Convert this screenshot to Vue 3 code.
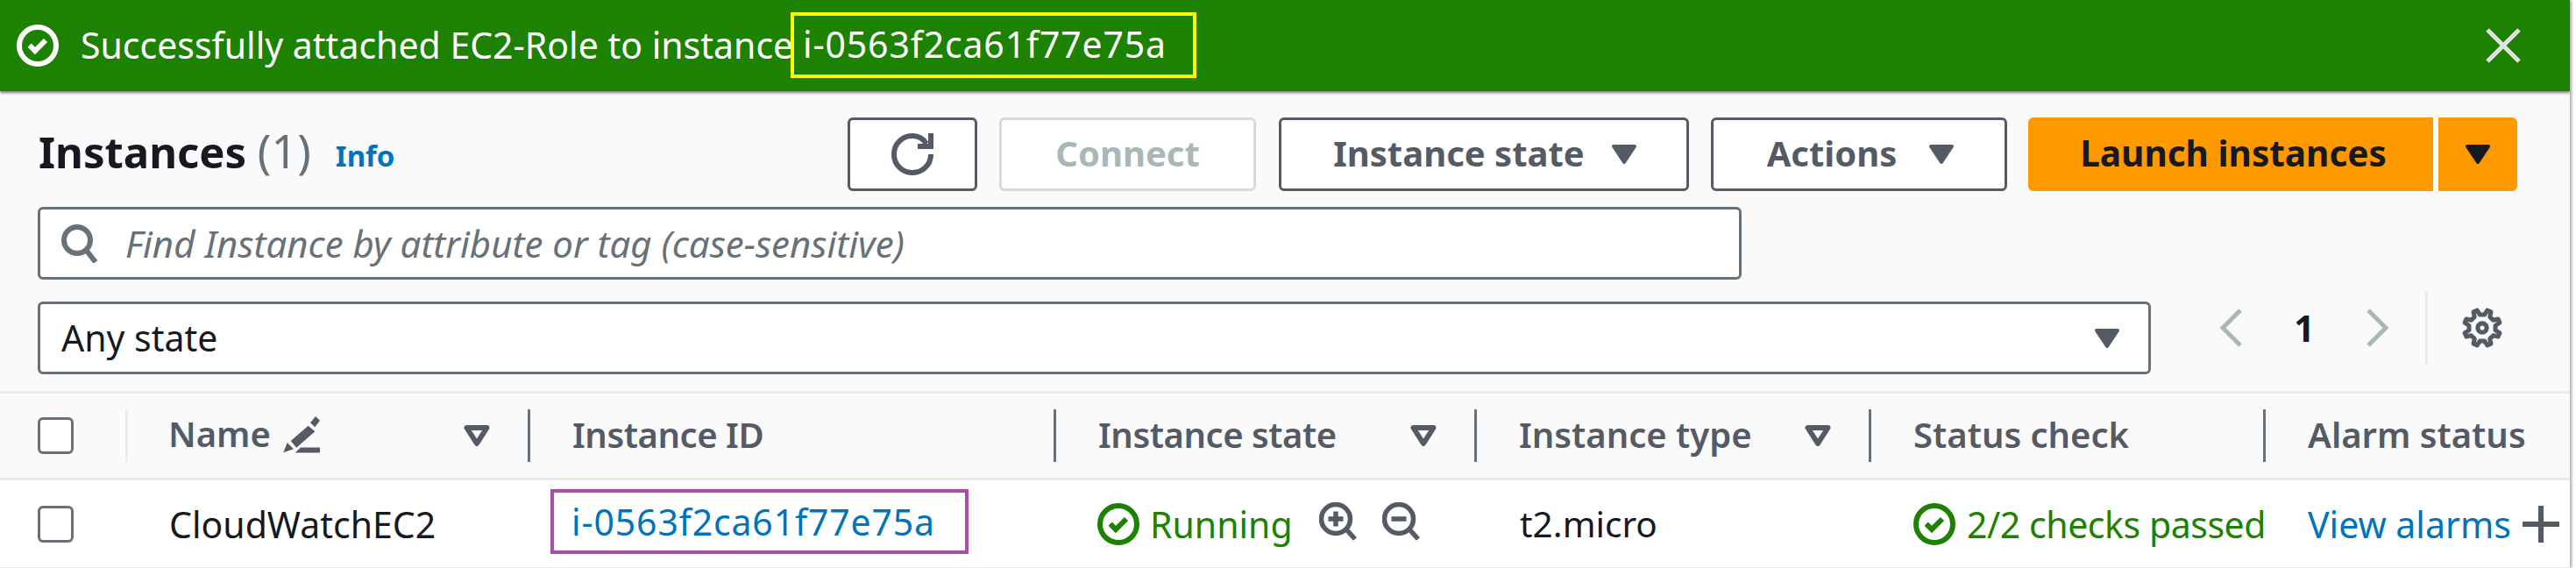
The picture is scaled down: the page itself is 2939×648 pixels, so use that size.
<script setup>
const gearPath = (() => {
  const pts = []
  const teeth = 8
  for (let i = 0; i < teeth; i++) {
    const a = (i / teeth) * Math.PI * 2 + Math.PI / 8
    const w = Math.PI / teeth
    const seq = [[-0.55, 5.1], [-0.28, 6.9], [0.28, 6.9], [0.55, 5.1]]
    for (const [o, r] of seq) {
      const t = a + o * w
      pts.push((8 + r * Math.cos(t)).toFixed(2) + ' ' + (8 + r * Math.sin(t)).toFixed(2))
    }
  }
  return 'M' + pts.join('L') + 'Z'
})()

const heads = [
  { label: 'Name', light: true, pencil: true, caret: true },
  { label: 'Instance ID', tight: true },
  { label: 'Instance state', caret: true, tight: true },
  { label: 'Instance type', caret: true },
  { label: 'Status check' },
  { label: 'Alarm status' }
]
</script>

<template>
  <div class="page">
    <div class="banner">
      <svg class="status-icon banner-icon" viewBox="0 0 16 16"><circle cx="8" cy="8" r="7" /><path d="M4.9 7.9 7 10l4-4" /></svg>
      <span class="banner-text">Successfully attached EC2-Role to instance</span>
      <span class="banner-id">i-0563f2ca61f77e75a</span>
      <svg class="close" viewBox="0 0 40 40"><path d="M2 2l36 36M38 2 2 38" /></svg>
    </div>

    <div class="panel">
      <div class="toolbar">
        <h1 class="title">Instances <span class="count">(1)</span></h1>
        <a class="info">Info</a>
        <div class="actions">
          <button class="btn refresh">
            <svg class="refresh-icon" viewBox="0 0 16 16"><path d="M10 5h5V0" /><path d="M15 8a6.91 6.91 0 0 1-7 7 6.91 6.91 0 0 1-7-7 6.91 6.91 0 0 1 7-7 6.09 6.09 0 0 1 5.29 3" /></svg>
          </button>
          <button class="btn connect"><span class="btn-label">Connect</span></button>
          <button class="btn state"><span class="btn-label">Instance state</span><svg class="caret" viewBox="0 0 30 24"><path d="M3 3h24L15 21z" /></svg></button>
          <button class="btn acts"><span class="btn-label">Actions</span><svg class="caret" viewBox="0 0 30 24"><path d="M3 3h24L15 21z" /></svg></button>
          <button class="btn launch"><span class="btn-label">Launch instances</span></button>
          <button class="btn launch-arrow"><svg class="caret" viewBox="0 0 30 24"><path d="M3 3h24L15 21z" /></svg></button>
        </div>
      </div>

      <div class="search">
        <svg class="search-icon" viewBox="0 0 44 44"><circle cx="18" cy="18" r="15" /><path d="M28 29l11 14" /></svg>
        <span class="placeholder">Find Instance by attribute or tag (case-sensitive)</span>
      </div>

      <div class="filter-row">
        <div class="select">
          <span class="select-value">Any state</span>
          <svg class="caret" viewBox="0 0 30 24"><path d="M3 3h24L15 21z" /></svg>
        </div>
        <div class="pager">
          <svg class="chev" viewBox="0 0 27 46"><path d="M24 3 4 23l20 20" /></svg>
          <span class="page-num">1</span>
          <svg class="chev" viewBox="0 0 27 46"><path d="M3 3l20 20L3 43" /></svg>
          <span class="pager-div"></span>
          <svg class="gear" viewBox="0 0 16 16"><path :d="gearPath" /><circle cx="8" cy="8" r="1.7" /></svg>
        </div>
      </div>

      <div class="thead">
        <div class="cell-check"><span class="checkbox"></span></div>
        <div v-for="h in heads" :key="h.label" class="th">
          <span class="divider" :class="{ light: h.light }"></span>
          <span class="th-label" :class="{ 'th-name': h.pencil, 'th-tight': h.tight }">{{ h.label }}</span>
          <svg v-if="h.pencil" class="pencil" viewBox="0 0 44 44">
            <path d="M32 7.3 38 0l5 4.7-5.7 7.6zM9.7 28 29.7 10.7l7.6 6.6-21 18.4zM1.3 41.3 5.7 30l7.3 7.3zM21 35.5h22v6H14.7z" />
          </svg>
          <svg v-if="h.caret" class="filter-caret" viewBox="0 0 30 24"><path d="M3.5 3h23L15 21z" /></svg>
        </div>
      </div>
    </div>

    <div class="trow">
      <div class="cell-check"><span class="checkbox"></span></div>
      <div class="td td-name">CloudWatchEC2</div>
      <div class="td td-id"><a class="id-link">i-0563f2ca61f77e75a</a></div>
      <div class="td td-state">
        <svg class="status-icon green" viewBox="0 0 16 16"><circle cx="8" cy="8" r="7" /><path d="M4.9 7.9 7 10l4-4" /></svg>
        <span class="ok running">Running</span>
        <svg class="zoom-icon first" viewBox="0 0 44 44"><circle cx="19" cy="19" r="16.5" /><path d="M31 31l10 11M19 10.5v17M10.5 19h17" /></svg>
        <svg class="zoom-icon" viewBox="0 0 44 44"><circle cx="19" cy="19" r="16.5" /><path d="M31 31l10 11M10.5 19h17" /></svg>
      </div>
      <div class="td td-type">t2.micro</div>
      <div class="td td-check">
        <svg class="status-icon green" viewBox="0 0 16 16"><circle cx="8" cy="8" r="7" /><path d="M4.9 7.9 7 10l4-4" /></svg>
        <span class="ok checks">2/2 checks passed</span>
      </div>
      <div class="td td-alarm">
        <a class="alarm-link">View alarms</a>
        <svg class="plus" viewBox="0 0 42 42"><path d="M21 0v42M0 21h42" /></svg>
      </div>
    </div>
  </div>
</template>

<style scoped>
.page {
  width: 2932px;
  height: 648px;
  font-family: "Noto Sans", sans-serif;
  font-size: 41px;
  color: #16191f;
  background: #fff;
  box-shadow: 2px 0 3px rgba(0, 0, 0, 0.35);
  overflow: hidden;
}
.banner {
  position: relative;
  z-index: 1;
  height: 104px;
  box-sizing: border-box;
  display: flex;
  align-items: center;
  padding-left: 19px;
  background: #1d8102;
  color: #fff;
  box-shadow: 0 2px 3px rgba(0, 0, 0, 0.5);
}
.status-icon {
  flex: none;
  width: 48px;
  height: 48px;
  fill: none;
  stroke-width: 2;
}
.status-icon.banner-icon {
  stroke: #fff;
}
.status-icon.green {
  stroke: #1d8102;
}
.banner-text {
  margin: -3px -25px 0 25px;
  width: 835px;
  white-space: nowrap;
}
.banner-id {
  box-sizing: border-box;
  width: 463px;
  height: 75px;
  margin-top: -2px;
  display: flex;
  align-items: center;
  padding: 0 0 3px 10px;
  border: 4px solid #ffff00;
  white-space: nowrap;
  letter-spacing: 0.85px;
}
.close {
  width: 40px;
  height: 40px;
  margin-left: auto;
  margin-right: 56px;
  fill: none;
  stroke: #e2e4e2;
  stroke-width: 5;
}
.panel {
  background: #fafafa;
  padding-top: 30px;
}
.toolbar {
  display: flex;
  align-items: center;
  height: 84px;
  padding-left: 44px;
}
.title {
  margin: -10px 0 0;
  font-size: 49px;
  font-weight: 700;
  white-space: nowrap;
}
.count {
  font-size: 52px;
  font-weight: 400;
  color: #687078;
}
.info {
  margin-left: 28px;
  margin-top: 2px;
  font-size: 33px;
  font-weight: 700;
  color: #0073bb;
}
.actions {
  display: flex;
  margin-left: auto;
  margin-right: 60px;
  gap: 25px;
}
.btn {
  box-sizing: border-box;
  height: 84px;
  display: flex;
  align-items: center;
  justify-content: center;
  padding: 0;
  background: #fff;
  border: 3px solid #545b64;
  border-radius: 6px;
  font: 700 40px "Noto Sans", sans-serif;
  color: #545b64;
}
.btn-label {
  margin-top: -3px;
}
.refresh { width: 148px; }
.connect {
  width: 293px;
  color: #aab7b8;
  border-color: #d5dbdb;
}
.state {
  width: 468px;
  margin-left: 1px;
  padding-left: 3px;
}
.acts {
  width: 338px;
  padding-left: 4px;
}
.launch {
  width: 462px;
  margin-left: -1px;
  padding-left: 6px;
  background: #ff9900;
  border: 0;
  border-radius: 6px 0 0 6px;
  font-size: 40.5px;
  color: #16191f;
}
.launch-arrow {
  width: 90px;
  margin-left: -19px;
  background: #ff9900;
  border: 0;
  border-radius: 0 6px 6px 0;
}
.refresh-icon {
  width: 48px;
  height: 48px;
  fill: none;
  stroke: #545b64;
  stroke-width: 2;
}
.caret {
  width: 30px;
  height: 24px;
  flex: none;
  fill: currentColor;
  stroke: currentColor;
  stroke-width: 4;
  stroke-linejoin: round;
}
.state .caret { margin-left: 30px; }
.acts .caret { margin-left: 36px; }
.launch-arrow .caret { color: #16191f; }
.search {
  box-sizing: border-box;
  width: 1944px;
  height: 83px;
  margin: 18px 0 0 43px;
  display: flex;
  align-items: center;
  padding-left: 24px;
  background: #fff;
  border: 3px solid #687078;
  border-radius: 6px;
}
.search-icon {
  width: 44px;
  height: 44px;
  flex: none;
  fill: none;
  stroke: #687078;
  stroke-width: 6;
}
.placeholder {
  margin-left: 29px;
  font-size: 42px;
  font-style: italic;
  color: #687078;
  white-space: nowrap;
}
.filter-row {
  display: flex;
  align-items: flex-start;
  margin: 25px 0 19px 43px;
  height: 83px;
}
.select {
  box-sizing: border-box;
  width: 2411px;
  height: 83px;
  display: flex;
  align-items: center;
  justify-content: space-between;
  padding: 0 32px 0 24px;
  background: #fff;
  border: 3px solid #687078;
  border-radius: 6px;
}
.select-value {
  margin-top: -2px;
}
.select .caret { color: #545b64; }
.pager {
  display: flex;
  align-items: center;
  height: 84px;
  margin-top: -12px;
  margin-left: 78px;
}
.chev {
  width: 27px;
  height: 46px;
  flex: none;
  fill: none;
  stroke: #aab7b8;
  stroke-width: 5;
}
.page-num {
  width: 140px;
  text-align: center;
  font-weight: 700;
}
.pager-div {
  width: 3px;
  height: 84px;
  margin-left: 41px;
  background: #eaeded;
}
.gear {
  width: 48px;
  height: 48px;
  margin-left: 38px;
  fill: none;
  stroke: #545b64;
  stroke-width: 1.7;
  stroke-linejoin: round;
}
.thead {
  display: grid;
  grid-template-columns: 143px 459px 600px 480px 450px 450px 350px;
  height: 102px;
  box-sizing: border-box;
  border-top: 3px solid #eaeded;
  border-bottom: 3px solid #eaeded;
}
.cell-check {
  display: flex;
  align-items: center;
  padding-left: 43px;
}
.checkbox {
  box-sizing: border-box;
  width: 41px;
  height: 42px;
  background: #fff;
  border: 3px solid #687078;
  border-radius: 6px;
}
.th {
  display: flex;
  align-items: center;
  min-width: 0;
  font-size: 40px;
  font-weight: 600;
  color: #545b64;
}
.th-label {
  white-space: nowrap;
  margin-top: -3px;
}
.th-label.th-name {
  margin: -6px 0 0 -2px;
}
.th-label.th-tight {
  letter-spacing: -0.45px;
}
.divider {
  flex: none;
  width: 3px;
  height: 60px;
  margin-right: 48px;
  background: #687078;
}
.divider.light {
  background: #eaeded;
}
.pencil {
  width: 44px;
  height: 44px;
  flex: none;
  margin-left: 13px;
  fill: #545b64;
}
.filter-caret {
  width: 30px;
  height: 24px;
  flex: none;
  margin-left: auto;
  margin-right: 43px;
  fill: none;
  stroke: #545b64;
  stroke-width: 6;
  stroke-linejoin: round;
}
.trow {
  display: grid;
  grid-template-columns: 143px 459px 600px 480px 450px 452px 348px;
  height: 99px;
  background: #fff;
  border-bottom: 1px solid #eaeded;
  box-sizing: content-box;
}
.td {
  display: flex;
  align-items: center;
  padding-left: 52px;
  min-width: 0;
  overflow: hidden;
  white-space: nowrap;
}
.td-name {
  padding-left: 50px;
}
.td-id {
  padding-left: 26px;
}
.id-link {
  box-sizing: border-box;
  width: 477px;
  height: 74px;
  margin-top: -5px;
  display: flex;
  align-items: center;
  padding-left: 20px;
  border: 4px solid #a94fa5;
  color: #0073bb;
  letter-spacing: 0.85px;
}
.td-state {
  padding-left: 50px;
}
.running {
  margin-left: 12px;
}
.ok {
  color: #1d8102;
}
.zoom-icon {
  width: 44px;
  height: 44px;
  flex: none;
  margin-top: -5px;
  margin-left: 28px;
  fill: none;
  stroke: #545b64;
  stroke-width: 5.5;
}
.zoom-icon.first {
  margin-left: 30px;
}
.checks {
  margin-left: 13px;
  letter-spacing: -0.45px;
}
.td-check {
  padding-left: 51px;
}
.td-alarm {
  padding-left: 49px;
}
.td-type {
  font-size: 40.5px;
}
.alarm-link {
  color: #0073bb;
}
.plus {
  width: 42px;
  height: 42px;
  flex: none;
  margin-left: 13px;
  fill: none;
  stroke: #545b64;
  stroke-width: 6;
}
</style>
